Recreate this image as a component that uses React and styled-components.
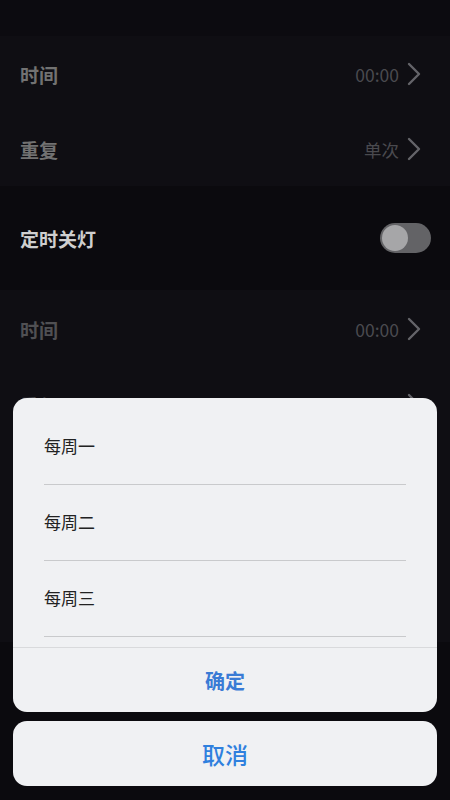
import React from 'react'
import styled, { createGlobalStyle } from 'styled-components'

const Global = createGlobalStyle`
  html, body {
    margin: 0;
    padding: 0;
    background: #0b0a0e;
    font-family: "Noto Sans CJK SC", "Noto Sans", sans-serif;
  }
  * { box-sizing: border-box; }
`

const Page = styled.div`
  width: 450px;
  height: 800px;
  position: relative;
  overflow: hidden;
  background: #0b0a0e;
`

const TopBar = styled.div`
  height: 36px;
  background: #0c0b10;
`

const Section = styled.section`
  background: ${p => p.$dark ? '#0b0a0e' : '#0f0e13'};
`

const Row = styled.div`
  height: ${p => p.$h || 75}px;
  display: flex;
  align-items: center;
  justify-content: space-between;
  padding: 0 19px 0 20px;
`

const Label = styled.span`
  font-size: 19px;
  font-weight: 700;
  color: ${p => p.$color || '#727272'};
`

const Value = styled.div`
  display: flex;
  align-items: center;
  gap: 8px;
  color: #4a4a4f;
  font-size: 17.5px;
  padding-right: 10px;
`

const Chevron = () => (
  <svg width="14" height="24" viewBox="0 0 14 24">
    <path d="M2 2 L12 12 L2 22" fill="none" stroke="#646469" strokeWidth="2.4" strokeLinecap="round" strokeLinejoin="round" />
  </svg>
)

const Toggle = styled.div`
  width: 51px;
  height: 30px;
  border-radius: 15px;
  background: #636366;
  padding: 2px;
  &::after {
    content: '';
    display: block;
    width: 26px;
    height: 26px;
    border-radius: 50%;
    background: #a6a6a8;
  }
`

const Overlay = styled.div`
  position: absolute;
  left: 0;
  right: 0;
  bottom: 14px;
  padding: 0 13px;
  display: flex;
  flex-direction: column;
  gap: 9px;
`

const Card = styled.div`
  background: #f0f1f3;
  border-radius: 14px;
  overflow: hidden;
`

const List = styled.div`
  height: 250px;
  overflow: hidden;
  padding-top: 11px;
  border-bottom: 1px solid #d9dadc;
`

const Item = styled.div`
  height: 76px;
  margin: 0 31px;
  display: flex;
  align-items: center;
  font-size: 17px;
  color: #222;
  border-bottom: 1px solid #c9cacc;
  padding-bottom: 2px;
`

const Action = styled.div`
  height: ${p => p.$h}px;
  display: flex;
  align-items: center;
  justify-content: center;
  color: ${p => p.$color};
  font-size: ${p => p.$size}px;
  font-weight: ${p => p.$weight};
`

const days = ['每周一', '每周二', '每周三']

export default function App() {
  return (
    <Page>
      <Global />
      <TopBar />
      <Section>
        <Row $h={76}>
          <Label>时间</Label>
          <Value>00:00<Chevron /></Value>
        </Row>
        <Row $h={74}>
          <Label>重复</Label>
          <Value>单次<Chevron /></Value>
        </Row>
      </Section>
      <Section $dark>
        <Row $h={104}>
          <Label $color="#cfcfcf">定时关灯</Label>
          <Toggle />
        </Row>
      </Section>
      <Section>
        <Row $h={78}>
          <Label $color="#505053">时间</Label>
          <Value>00:00<Chevron /></Value>
        </Row>
        <Row $h={74}>
          <Label $color="#505053">重复</Label>
          <Value>单次<Chevron /></Value>
        </Row>
        <Row $h={200} />
      </Section>
      <Overlay>
        <Card>
          <List>
            {days.map(d => <Item key={d}>{d}</Item>)}
          </List>
          <Action $h={64} $color="#3a7bd5" $size={20} $weight={700}>确定</Action>
        </Card>
        <Card>
          <Action $h={65} $color="#2f80de" $size={23} $weight={500}>取消</Action>
        </Card>
      </Overlay>
    </Page>
  )
}
